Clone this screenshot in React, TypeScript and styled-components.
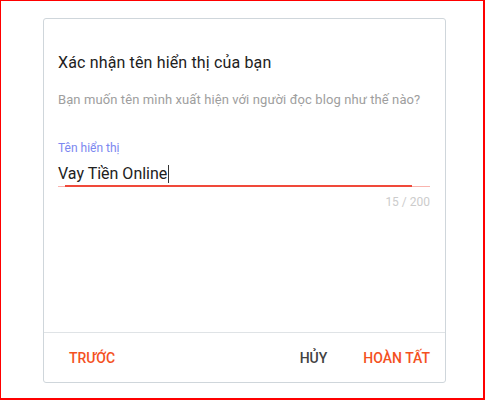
import { FunctionComponent } from "react";
import styled, { createGlobalStyle } from "styled-components";

const GlobalStyle = createGlobalStyle`
  html, body {
    margin: 0;
    padding: 0;
    background: #ffffff;
    font-family: Roboto, "Liberation Sans", Arial, sans-serif;
  }
`;

const App: FunctionComponent = () => {
  return (
    <>
      <GlobalStyle />
      <Frame>
        <Card>
          <Body>
            <Title>Xác nhận tên hiển thị của bạn</Title>
            <Subtitle>
              Bạn muốn tên mình xuất hiện với người đọc blog như thế nào?
            </Subtitle>
            <Field>
              <Label>Tên hiển thị</Label>
              <InputText>
                Vay Tiền Online
                <Caret />
              </InputText>
              <Underline>
                <UnderlineActive />
              </Underline>
              <Counter>15 / 200</Counter>
            </Field>
          </Body>
          <Footer>
            <ActionButton $tone="accent">Trước</ActionButton>
            <Spacer />
            <ActionButton $tone="plain">Hủy</ActionButton>
            <ActionButton $tone="accent">Hoàn tất</ActionButton>
          </Footer>
        </Card>
      </Frame>
    </>
  );
};

export default App;

const Frame = styled.div`
  box-sizing: border-box;
  width: 485px;
  height: 400px;
  border: 1px solid #ff0000;
  border-right-width: 2px;
  border-bottom-width: 2px;
  padding: 17px 0 0 42px;
`;

const Card = styled.div`
  box-sizing: border-box;
  width: 403px;
  height: 365px;
  border: 1px solid #cfd6db;
  border-radius: 3px;
  display: flex;
  flex-direction: column;
  background: #fff;
`;

const Body = styled.div`
  flex: 1;
  padding: 33px 15px 0 14px;
  border-bottom: 1px solid #dfe3e6;
`;

const Title = styled.h2`
  margin: 0;
  font-size: 16px;
  font-weight: 400;
  line-height: 22px;
  letter-spacing: 0.15px;
  color: #212121;
`;

const Subtitle = styled.p`
  margin: 17px 0 0;
  font-size: 13px;
  line-height: 18px;
  letter-spacing: 0.1px;
  color: #9e9e9e;
`;

const Field = styled.div`
  margin-top: 32px;
  display: flex;
  flex-direction: column;
`;

const Label = styled.label`
  font-size: 12px;
  line-height: 14px;
  color: #7b87f0;
`;

const InputText = styled.div`
  margin-top: 8px;
  font-size: 16px;
  line-height: 22px;
  color: #212121;
  display: flex;
  align-items: center;
`;

const Caret = styled.span`
  display: inline-block;
  width: 1px;
  height: 18px;
  background: #333;
  margin-left: 1px;
`;

const Underline = styled.div`
  position: relative;
  margin-top: 1px;
  height: 1px;
  background: #f9b4ae;
`;

const UnderlineActive = styled.div`
  position: absolute;
  left: 7px;
  right: 18px;
  top: -1px;
  height: 2px;
  background: #f0493a;
`;

const Counter = styled.div`
  margin-top: 8px;
  align-self: flex-end;
  font-size: 12px;
  line-height: 14px;
  color: #cccccc;
`;

const Footer = styled.div`
  height: 49px;
  display: flex;
  align-items: center;
  padding: 0 15px 0 25px;
`;

const Spacer = styled.div`
  flex: 1;
`;

const ActionButton = styled.button<{ $tone: "accent" | "plain" }>`
  border: none;
  background: none;
  padding: 0;
  margin-left: 36px;
  font-family: Roboto, "Liberation Sans", Arial, sans-serif;
  font-size: 14px;
  font-weight: 500;
  text-transform: uppercase;
  color: ${({ $tone }) => ($tone === "accent" ? "#f4511e" : "#424242")};
  &:first-child {
    margin-left: 0;
  }
`;
